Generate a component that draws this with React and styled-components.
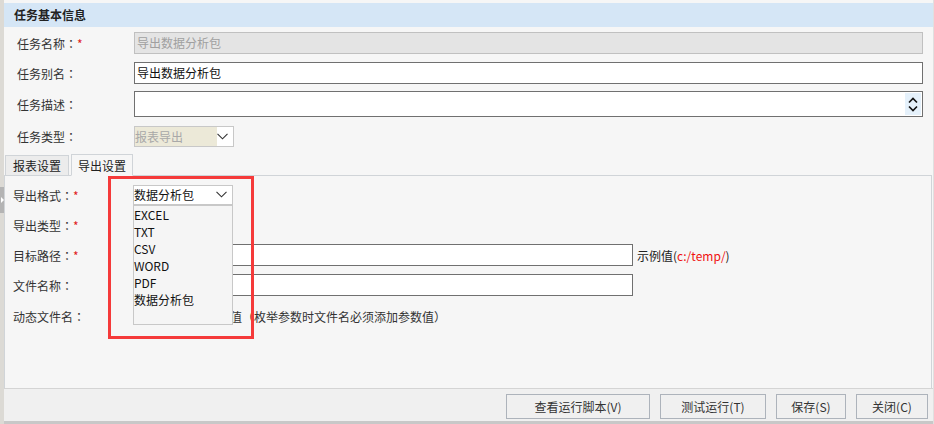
import React from 'react';
import styled, { createGlobalStyle } from 'styled-components';

const GlobalStyle = createGlobalStyle`
  html, body {
    margin: 0;
    padding: 0;
    background: #f6f6f6;
  }
  body {
    font-family: "Noto Sans CJK SC", "Noto Sans", sans-serif;
    font-size: 12px;
    color: #333;
  }
`;

const Frame = styled.div`
  position: relative;
  width: 934px;
  height: 424px;
  display: flex;
  overflow: hidden;
  background: #f6f6f6;
`;

const Rail = styled.div`
  width: 4px;
  flex: none;
  background: #dcdad5;
  padding-top: 187px;
  box-sizing: border-box;
`;

const RailHandle = styled.div`
  width: 4px;
  height: 26px;
  background: #b4b4b4;
  display: flex;
  align-items: center;
  justify-content: center;
  &::after {
    content: '';
    border-left: 3px solid #fff;
    border-top: 3px solid transparent;
    border-bottom: 3px solid transparent;
  }
`;

const Main = styled.div`
  flex: 1;
  display: flex;
  flex-direction: column;
  border-right: 1px solid #e0e0e0;
  padding-top: 3px;
  box-sizing: border-box;
`;

const Header = styled.div`
  height: 24px;
  line-height: 24px;
  background: #d5e6f6;
  padding-left: 10px;
  font-weight: bold;
  color: #222;
`;

const Form = styled.div`
  display: flex;
  flex-direction: column;
  padding: 5px 10px 0 0;
`;

const Row = styled.div`
  display: flex;
  align-items: center;
  height: ${p => p.h}px;
  margin-bottom: ${p => p.mb || 0}px;
`;

const Label = styled.div`
  width: ${p => p.w}px;
  flex: none;
  padding-left: ${p => p.pl}px;
  box-sizing: border-box;
  color: #333;
  white-space: nowrap;
`;

// centred full-width colon, as the original UI font draws it
const Colon = styled.span`
  font-family: "Noto Sans CJK TC", "Noto Sans CJK SC", sans-serif;
`;

const Req = styled.span`
  color: #e02020;
`;

const TextBox = styled.div`
  flex: ${p => (p.w ? 'none' : 1)};
  width: ${p => (p.w ? `${p.w}px` : 'auto')};
  height: ${p => p.h}px;
  box-sizing: border-box;
  border: 1px solid ${p => (p.disabled ? '#c0c0c0' : '#707070')};
  background: ${p => (p.disabled ? '#e4e4e4' : '#fff')};
  color: ${p => (p.disabled ? '#a0a0a0' : '#111')};
  line-height: ${p => p.h - 2}px;
  padding-left: 2px;
  display: flex;
  align-items: stretch;
  justify-content: space-between;
  white-space: nowrap;
`;

const Spinner = styled.div`
  width: 16px;
  background: #e5f1fb;
  display: flex;
  flex-direction: column;
  align-items: center;
  justify-content: center;
  gap: 1px;
  margin: 1px 1px 1px 0;
`;

const Select = styled.div`
  width: 100px;
  height: ${p => p.h}px;
  box-sizing: border-box;
  border: 1px solid #c8c8c8;
  background: #fff;
  display: flex;
  align-items: center;
  position: relative;
`;

const SelectText = styled.div`
  flex: 1;
  height: 100%;
  line-height: ${p => p.h - 2}px;
  background: ${p => (p.muted ? '#ece9d8' : 'transparent')};
  color: ${p => (p.muted ? '#a8a8a8' : '#111')};
  margin-right: ${p => (p.muted ? 16 : 0)}px;
  white-space: nowrap;
  overflow: hidden;
`;

const Chevron = styled.svg`
  position: absolute;
  right: 5px;
  top: 50%;
  margin-top: -4px;
`;

const DropList = styled.div`
  position: absolute;
  left: -1px;
  top: ${p => p.h - 1}px;
  width: 100px;
  height: 120px;
  box-sizing: border-box;
  border: 1px solid #c8c8c8;
  background: #f5f5f5;
  z-index: 5;
`;

const DropItem = styled.div`
  height: 17px;
  line-height: 17px;
  color: #111;
  white-space: nowrap;
`;

const Tabs = styled.div`
  display: flex;
  align-items: flex-end;
  margin-top: 6px;
  padding-left: 1px;
  gap: 2px;
  height: 22px;
`;

const Tab = styled.div`
  height: ${p => (p.active ? 22 : 20)}px;
  line-height: ${p => (p.active ? 21 : 19)}px;
  padding: 0 ${p => (p.active ? 6 : 7)}px;
  box-sizing: border-box;
  border: 1px solid #d0d4d8;
  border-bottom: ${p => (p.active ? '1px solid #f6f6f6' : 'none')};
  background: ${p => (p.active ? '#f6f6f6' : '#ececec')};
  color: #222;
  margin-bottom: ${p => (p.active ? -1 : 0)}px;
  position: relative;
  z-index: ${p => (p.active ? 2 : 1)};
`;

const Panel = styled.div`
  flex: 1;
  border: 1px solid #d0d4d8;
  border-bottom: none;
  margin-right: 1px;
  padding-top: 9px;
  display: flex;
  flex-direction: column;
`;

const Hint = styled.span`
  margin-left: 4px;
  color: #222;
  white-space: nowrap;
`;

const Red = styled.span`
  color: #f01010;
`;

const Check = styled.span`
  width: 13px;
  height: 13px;
  box-sizing: border-box;
  border: 1px solid #707070;
  background: #fff;
  margin-right: 12px;
  flex: none;
`;

const Footer = styled.div`
  flex: none;
  height: 36px;
  background: #f0f0f0;
  border-top: 1px solid #d4d4d4;
  border-bottom: 3px solid #c8c8c8;
  display: flex;
  align-items: center;
  justify-content: flex-end;
  gap: 10px;
  padding: 2px 5px 0 0;
  box-sizing: border-box;
`;

const Button = styled.button`
  width: ${p => p.w}px;
  height: 25px;
  border: 1px solid #adb3bb;
  background: #f0f0f0;
  font-family: inherit;
  font-size: 12px;
  color: #333;
  padding: 0;
  cursor: pointer;
`;

const Highlight = styled.div`
  position: absolute;
  left: 108px;
  top: 176px;
  width: 146px;
  height: 163px;
  box-sizing: border-box;
  border: 3px solid #f53a3a;
  pointer-events: none;
  z-index: 10;
`;

const ChevronIcon = () => (
  <Chevron width="11" height="7" viewBox="0 0 11 7">
    <path d="M0.5 0.8 L5.5 5.8 L10.5 0.8" fill="none" stroke="#333" strokeWidth="1.1" />
  </Chevron>
);

const FieldLabel = ({ text, required, w, pl }) => (
  <Label w={w} pl={pl}>
    {text}
    <Colon>：</Colon>
    {required && <Req>*</Req>}
  </Label>
);

const formats = ['EXCEL', 'TXT', 'CSV', 'WORD', 'PDF', '数据分析包'];

const buttons = [
  { text: '查看运行脚本(V)', w: 144 },
  { text: '测试运行(T)', w: 106 },
  { text: '保存(S)', w: 70 },
  { text: '关闭(C)', w: 72 },
];

export default function App() {
  return (
    <Frame>
      <GlobalStyle />
      <Rail>
        <RailHandle />
      </Rail>
      <Main>
        <Header>任务基本信息</Header>
        <Form>
          <Row h={22} mb={8}>
            <FieldLabel w={130} pl={13} text="任务名称" required />
            <TextBox h={22} disabled>导出数据分析包</TextBox>
          </Row>
          <Row h={22} mb={7}>
            <FieldLabel w={130} pl={13} text="任务别名" />
            <TextBox h={22}>导出数据分析包</TextBox>
          </Row>
          <Row h={26} mb={9}>
            <FieldLabel w={130} pl={13} text="任务描述" />
            <TextBox h={26}>
              <span />
              <Spinner>
                <svg width="10" height="7" viewBox="0 0 10 7">
                  <path d="M1 5.5 L5 1.5 L9 5.5" fill="none" stroke="#111" strokeWidth="1.6" />
                </svg>
                <svg width="10" height="7" viewBox="0 0 10 7">
                  <path d="M1 1.5 L5 5.5 L9 1.5" fill="none" stroke="#111" strokeWidth="1.6" />
                </svg>
              </Spinner>
            </TextBox>
          </Row>
          <Row h={21}>
            <FieldLabel w={130} pl={13} text="任务类型" />
            <Select h={21}>
              <SelectText h={21} muted>报表导出</SelectText>
              <ChevronIcon />
            </Select>
          </Row>
        </Form>
        <Tabs>
          <Tab>报表设置</Tab>
          <Tab active>导出设置</Tab>
        </Tabs>
        <Panel>
          <Row h={20} mb={10}>
            <FieldLabel w={128} pl={8} text="导出格式" required />
            <Select h={20}>
              <SelectText h={20}>数据分析包</SelectText>
              <ChevronIcon />
              <DropList h={20}>
                {formats.map(f => (
                  <DropItem key={f}>{f}</DropItem>
                ))}
              </DropList>
            </Select>
          </Row>
          <Row h={20} mb={9}>
            <FieldLabel w={128} pl={8} text="导出类型" required />
          </Row>
          <Row h={22} mb={8}>
            <FieldLabel w={128} pl={8} text="目标路径" required />
            <TextBox h={22} w={500} />
            <Hint>示例值(<Red>c:/temp/</Red>)</Hint>
          </Row>
          <Row h={22} mb={9}>
            <FieldLabel w={128} pl={8} text="文件名称" />
            <TextBox h={22} w={500} />
          </Row>
          <Row h={22}>
            <FieldLabel w={128} pl={8} text="动态文件名" />
            <Check />
            <span>自动添加参数值（枚举参数时文件名必须添加参数值）</span>
          </Row>
        </Panel>
        <Footer>
          {buttons.map(b => (
            <Button key={b.text} w={b.w}>{b.text}</Button>
          ))}
        </Footer>
      </Main>
      <Highlight />
    </Frame>
  );
}
